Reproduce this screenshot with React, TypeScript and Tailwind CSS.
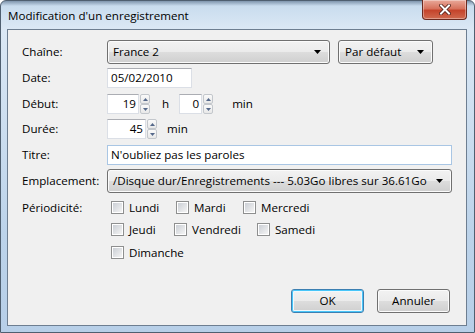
import React from "react";

const FONT = { fontFamily: '"Open Sans", "Noto Sans", sans-serif' };

function Arrow() {
  return (
    <svg width="7" height="4" viewBox="0 0 7 4" className="shrink-0">
      <path d="M0 0h7L3.5 4z" fill="#000" />
    </svg>
  );
}

function Combo({ text, width, pl = 5 }: { text: string; width: string; pl?: number }) {
  return (
    <div
      className={`${width} h-[24px] flex items-center justify-between rounded-[3px] border border-[#707070] bg-[linear-gradient(#f2f2f2,#ebebeb_50%,#dddddd_50%,#cfcfcf)] shadow-[inset_0_0_0_1px_#fbfbfb] pr-[8px]`}
      style={{ paddingLeft: pl }}
    >
      <span className="whitespace-nowrap">{text}</span>
      <Arrow />
    </div>
  );
}

function TextBox({ value, width, focus }: { value: string; width: string; focus?: boolean }) {
  return (
    <div
      className={`${width} h-[20px] flex items-center pl-[3px] bg-white border ${
        focus ? "border-[#a9c6e4]" : "border-[#dbdfe6] border-t-[#abadb3]"
      }`}
    >
      {value}
    </div>
  );
}

function SpinArrow({ up }: { up?: boolean }) {
  return (
    <div className="h-[10px] w-[10px] flex items-center justify-center border border-[#c3c7cc] bg-[linear-gradient(#fafafa,#e8e8e8)] rounded-[2px]">
      <svg width="5" height="3" viewBox="0 0 5 3">
        <path d={up ? "M0 3h5L2.5 0z" : "M0 0h5L2.5 3z"} fill="#55688a" />
      </svg>
    </div>
  );
}

function Spin({ value, width }: { value: string; width: string }) {
  return (
    <div className="flex items-center h-[20px]">
      <div className={`${width} h-[20px] flex items-center justify-end pr-[2px] bg-white border border-[#dbdfe6] border-t-[#abadb3]`}>
        {value}
      </div>
      <div className="flex flex-col ml-[1px]">
        <SpinArrow up />
        <SpinArrow />
      </div>
    </div>
  );
}

function Check({ label, width }: { label: string; width?: string }) {
  return (
    <div className={`flex items-center gap-[5px] ${width ?? ""}`}>
      <div className="w-[13px] h-[13px] border border-[#8e8f8f] bg-white p-[1px]">
        <div className="w-full h-full bg-[linear-gradient(135deg,#cbcfd5,#f4f4f4)]" />
      </div>
      <span>{label}</span>
    </div>
  );
}

function Row({ label, top, h = 20, children }: { label: string; top: string; h?: number; children: React.ReactNode }) {
  return (
    <div className={`flex items-center ${top}`} style={{ height: h }}>
      <div className="w-[85px] shrink-0">{label}</div>
      {children}
    </div>
  );
}

export default function App() {
  return (
    <div className="w-[475px] h-[333px] overflow-hidden text-[11.6px] text-black" style={FONT}>
      <div className="w-full h-full flex flex-col border border-[#4f5f70] rounded-t-[6px] bg-[linear-gradient(180deg,#7f95ad_0px,#c9dcee_5px,#dbe8f5_28px,#bcd3ea_70%,#b7cfe8)]">
        {/* title bar */}
        <div className="h-[28px] flex justify-between shrink-0">
          <div className="pl-[7px] pt-[6px] text-black">Modification d'un enregistrement</div>
          <div className="mr-[7px] -mt-[1px] w-[45px] h-[20px] flex items-center justify-center rounded-b-[4px] border border-[#6b2a20] border-t-0 bg-[linear-gradient(#e9a99a,#d7725d_45%,#c5442c_55%,#d06a4f)] shadow-[inset_0_0_0_1px_rgba(255,255,255,0.35)]">
            <svg width="12" height="11" viewBox="0 0 12 11">
              <path d="M2 1.5l8 8M10 1.5l-8 8" stroke="#4a1a12" strokeWidth="3.6" strokeLinecap="square" />
              <path d="M2 1.5l8 8M10 1.5l-8 8" stroke="#fff" strokeWidth="2" strokeLinecap="square" />
            </svg>
          </div>
        </div>

        {/* client area */}
        <div className="ml-[6px] w-[460px] h-[297px] border border-[#6d7e91] bg-[#f0f0f0] flex flex-col pl-[14px] pt-[10px]">
          <Row label="Chaîne:" top="mt-0" h={24}>
            <Combo text="France 2" width="w-[223px]" />
            <div className="ml-[8px]">
              <Combo text="Par défaut" width="w-[95px]" pl={6} />
            </div>
          </Row>

          <Row label="Date:" top="mt-[4px]">
            <TextBox value="05/02/2010" width="w-[85px]" />
          </Row>

          <Row label="Début:" top="mt-[6px]">
            <Spin value="19" width="w-[32px]" />
            <span className="ml-[12px]">h</span>
            <div className="ml-[10px]">
              <Spin value="0" width="w-[23px]" />
            </div>
            <span className="ml-[19px]">min</span>
          </Row>

          <Row label="Durée:" top="mt-[5px]">
            <Spin value="45" width="w-[39px]" />
            <span className="ml-[10px]">min</span>
          </Row>

          <Row label="Titre:" top="mt-[6px]">
            <TextBox value="N'oubliez pas les paroles" width="w-[345px]" focus />
          </Row>

          <Row label="Emplacement:" top="mt-[4px]" h={24}>
            <Combo text="/Disque dur/Enregistrements --- 5.03Go libres sur 36.61Go" width="w-[345px]" />
          </Row>

          <Row label="Périodicité:" top="mt-[5px]">
            <div className="flex pl-[4px]">
              <Check label="Lundi" width="w-[65px]" />
              <Check label="Mardi" width="w-[67px]" />
              <Check label="Mercredi" />
            </div>
          </Row>

          <Row label="" top="mt-[2px]">
            <div className="flex pl-[4px]">
              <Check label="Jeudi" width="w-[63px]" />
              <Check label="Vendredi" width="w-[83px]" />
              <Check label="Samedi" />
            </div>
          </Row>

          <Row label="" top="mt-[3px]">
            <div className="flex pl-[4px]">
              <Check label="Dimanche" />
            </div>
          </Row>

          <div className="mt-auto mb-[12px] mr-[16px] flex justify-end gap-[13px]">
            <div className="w-[73px] h-[24px] flex items-center justify-center rounded-[3px] border border-[#3c7fb1] bg-[linear-gradient(#f2f2f2,#ebebeb_50%,#dddddd_50%,#cfcfcf)] shadow-[inset_0_0_0_1px_#48c6f9,inset_0_0_0_2px_#f0f8fc]">
              OK
            </div>
            <div className="w-[73px] h-[24px] flex items-center justify-center rounded-[3px] border border-[#707070] bg-[linear-gradient(#f2f2f2,#ebebeb_50%,#dddddd_50%,#cfcfcf)] shadow-[inset_0_0_0_1px_#fbfbfb]">
              Annuler
            </div>
          </div>
        </div>
      </div>
    </div>
  );
}
